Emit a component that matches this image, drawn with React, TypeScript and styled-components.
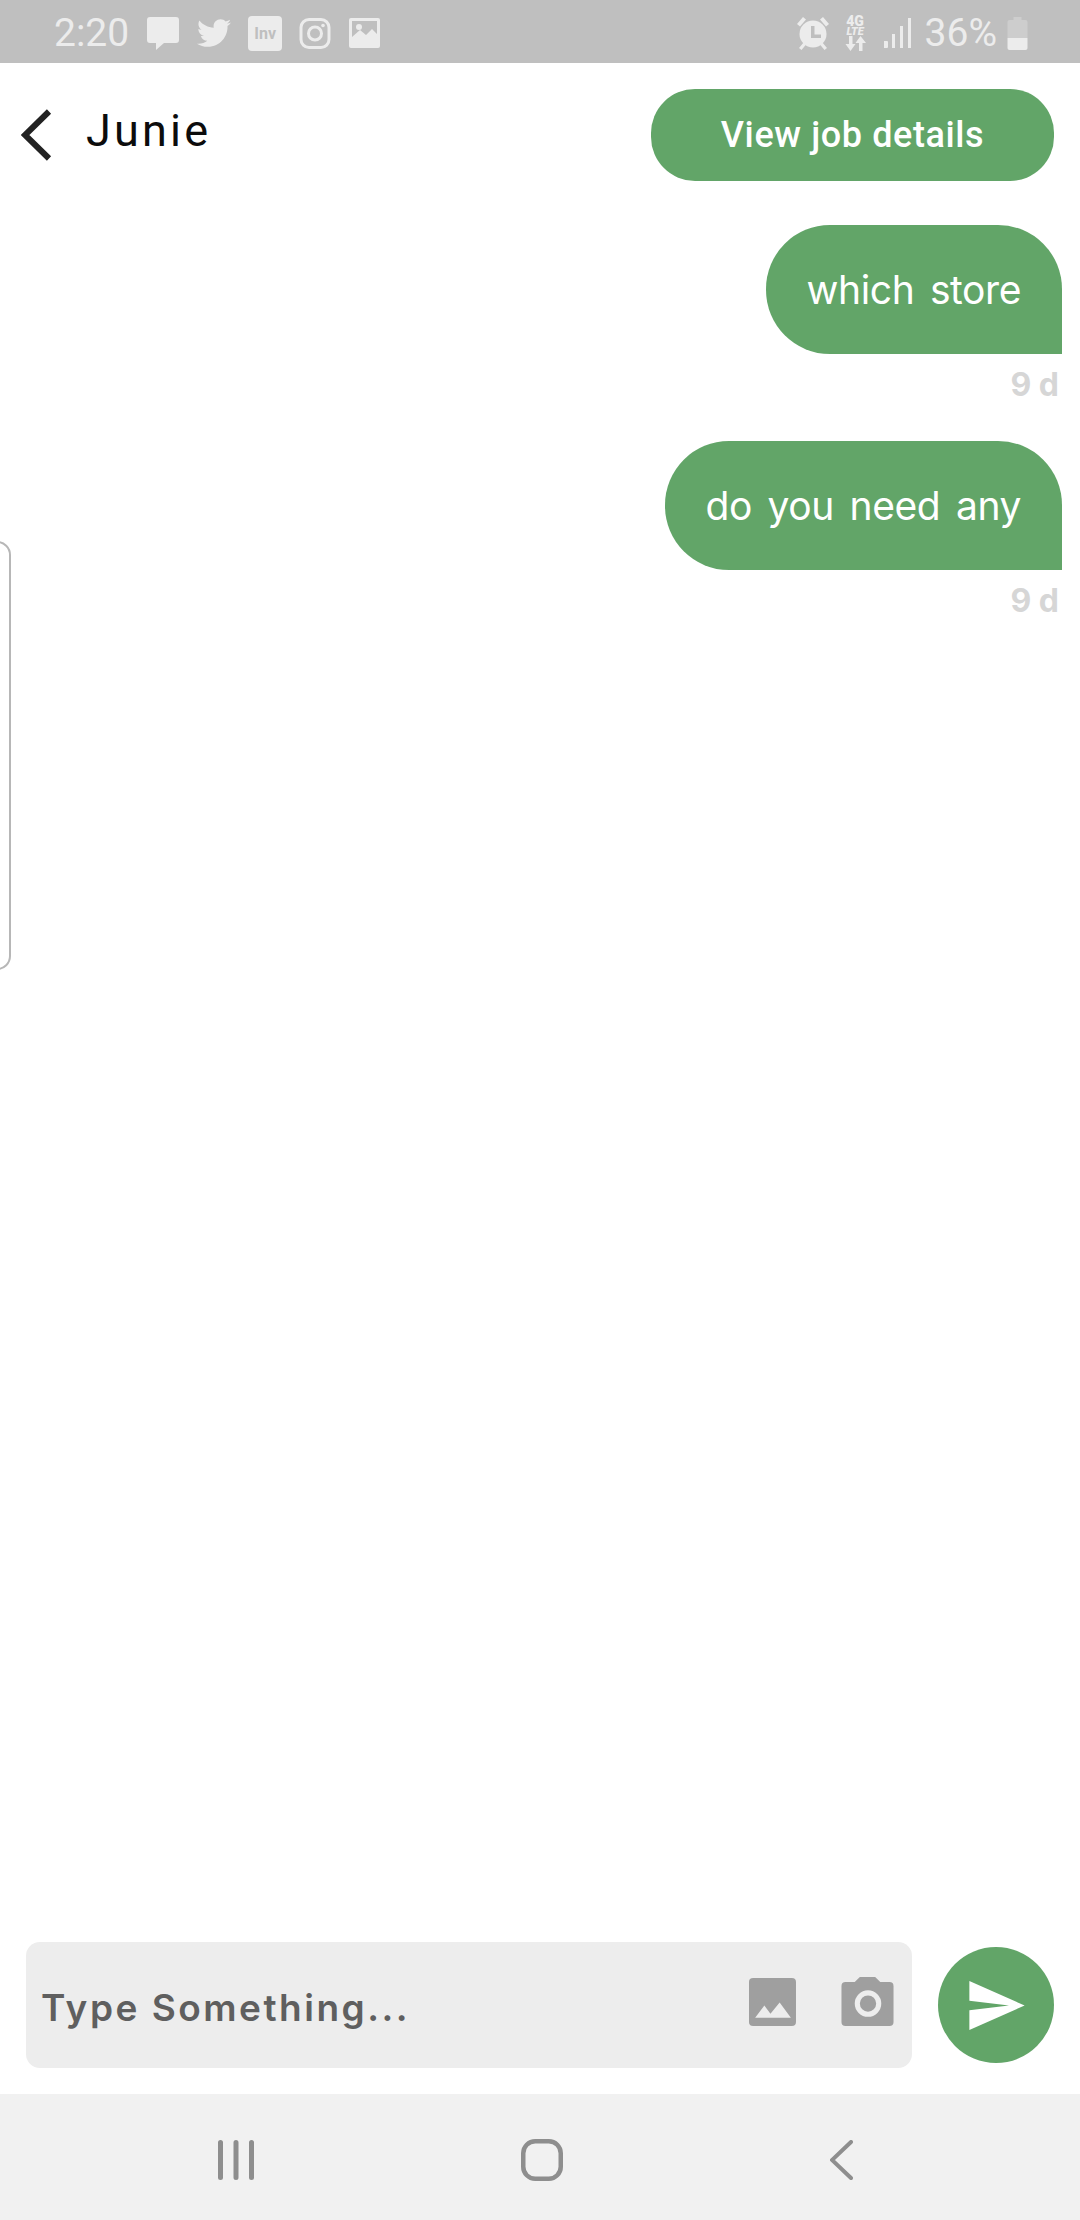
import { FaTwitter } from "react-icons/fa";
import styled, { createGlobalStyle } from "styled-components";

const GlobalStyle = createGlobalStyle`
  html, body {
    margin: 0;
    padding: 0;
    background: #ffffff;
  }
`;

const bubbleFont = `"Inter", "Noto Sans", sans-serif`;
const green = "#62a568";
const statusInk = "#ececec";

const Screen = styled.div`
  position: relative;
  width: 1080px;
  height: 2220px;
  display: flex;
  flex-direction: column;
  overflow: hidden;
  background: #ffffff;
`;

const StatusBar = styled.div`
  height: 63px;
  flex: none;
  display: flex;
  align-items: center;
  justify-content: space-between;
  padding: 3px 52px 0 54px;
  box-sizing: border-box;
  background: #bfbfbf;
  color: ${statusInk};
`;

const StatusGroup = styled.div<{ $gap: number }>`
  display: flex;
  align-items: center;
  gap: ${(props) => props.$gap}px;
`;

const StatusText = styled.span<{ $after: number }>`
  font-family: "Roboto", sans-serif;
  font-weight: 400;
  font-size: 39px;
  line-height: 40px;
  margin-right: ${(props) => props.$after}px;
`;

const TwitterIcon = styled(FaTwitter)`
  width: 34px;
  height: 34px;
  display: block;
  color: ${statusInk};
`;

const InvBadge = styled.div`
  width: 34px;
  height: 35px;
  border-radius: 4px;
  background: ${statusInk};
  color: #bfbfbf;
  font-family: "Roboto", sans-serif;
  font-weight: 700;
  font-size: 16px;
  display: flex;
  align-items: center;
  justify-content: center;
`;

const NetworkStack = styled.div`
  width: 23px;
  display: flex;
  flex-direction: column;
  align-items: center;
  font-family: "Roboto", sans-serif;
  font-weight: 900;
  color: ${statusInk};
`;

const NetworkLabel = styled.span<{ $size: number; $italic?: boolean }>`
  font-size: ${(props) => props.$size}px;
  line-height: ${(props) => props.$size - 2}px;
  font-style: ${(props) => (props.$italic ? "italic" : "normal")};
`;

const Header = styled.header`
  flex: none;
  display: flex;
  align-items: center;
  padding: 26px 26px 0 21px;
`;

const BackIcon = styled.svg`
  width: 31px;
  height: 52px;
  display: block;
  flex: none;
`;

const Name = styled.div`
  margin: -10px 0 0 34px;
  flex: 1;
  font-family: "Roboto", sans-serif;
  font-size: 45px;
  letter-spacing: 3.2px;
  color: #0c0c0c;
`;

const JobButton = styled.button`
  width: 403px;
  height: 92px;
  border: none;
  border-radius: 44px;
  background: ${green};
  color: #ffffff;
  font-family: "Roboto", sans-serif;
  font-weight: 500;
  font-size: 36px;
  letter-spacing: 0.6px;
  padding: 0;
`;

const Messages = styled.main`
  flex: 1;
  display: flex;
  flex-direction: column;
  align-items: flex-end;
  gap: 29px;
  padding: 44px 18px 0 0;
`;

const Message = styled.div`
  display: flex;
  flex-direction: column;
  align-items: flex-end;
`;

const Bubble = styled.div`
  height: 129px;
  box-sizing: border-box;
  display: flex;
  align-items: center;
  padding: 0 41px;
  border-radius: 64px 64px 0 64px;
  background: ${green};
  color: #ffffff;
  font-family: ${bubbleFont};
  font-size: 39px;
  letter-spacing: -0.4px;
  word-spacing: 5px;
`;

const TimeStamp = styled.div`
  margin: 11px 3px 0 0;
  height: 47px;
  line-height: 40px;
  font-family: ${bubbleFont};
  font-weight: 700;
  font-size: 32px;
  color: #d6d6d6;
`;

const SideTab = styled.div`
  position: absolute;
  left: -21px;
  top: 541px;
  width: 28px;
  height: 425px;
  border: 2px solid #b7b7b7;
  border-radius: 14px;
  background: #ffffff;
`;

const Composer = styled.div`
  flex: none;
  display: flex;
  align-items: center;
  gap: 26px;
  padding: 0 26px 26px 26px;
`;

const InputBox = styled.div`
  flex: 1;
  height: 126px;
  box-sizing: border-box;
  display: flex;
  align-items: center;
  padding: 0 18px 0 15px;
  border-radius: 14px;
  background: #ededed;
`;

const Placeholder = styled.div`
  flex: 1;
  margin-top: 5px;
  font-family: ${bubbleFont};
  font-weight: 600;
  font-size: 37px;
  letter-spacing: 2.5px;
  color: #5f5f5f;
`;

const InputIcons = styled.div`
  display: flex;
  align-items: center;
  gap: 45px;
  margin-bottom: 7px;
`;

const SendButton = styled.button`
  width: 116px;
  height: 116px;
  flex: none;
  border: none;
  padding: 0;
  border-radius: 50%;
  background: ${green};
  display: flex;
  align-items: center;
  justify-content: center;
`;

const NavBar = styled.nav`
  height: 126px;
  flex: none;
  display: flex;
  align-items: center;
  justify-content: space-between;
  padding: 6px 227px 0 218px;
  box-sizing: border-box;
  background: #f1f1f1;
`;

export default function App() {
  return (
    <Screen>
      <GlobalStyle />
      <StatusBar>
        <StatusGroup $gap={17}>
          <StatusText $after={0}>2:20</StatusText>
          <svg width="34" height="33" viewBox="0 0 32 33">
            <path d="M3 0h26a3 3 0 0 1 3 3v20a3 3 0 0 1-3 3H17l-8 7v-7H3a3 3 0 0 1-3-3V3a3 3 0 0 1 3-3z" fill={statusInk} />
          </svg>
          <TwitterIcon />
          <InvBadge>Inv</InvBadge>
          <svg width="32" height="31" viewBox="0 0 31 31" fill="none" stroke={statusInk} strokeWidth="3">
            <rect x="1.5" y="1.5" width="28" height="28" rx="8" />
            <circle cx="15.5" cy="15.5" r="6.5" />
            <circle cx="23.5" cy="7.5" r="1.8" fill={statusInk} stroke="none" />
          </svg>
          <svg width="33" height="30" viewBox="0 0 31 30">
            <rect width="31" height="30" rx="2" fill={statusInk} />
            <rect x="3" y="3" width="25" height="24" fill="#bfbfbf" />
            <path d="M3 19l8-7 6 5 6-6 5 5v11H3z" fill={statusInk} />
            <circle cx="10" cy="9" r="3" fill={statusInk} />
          </svg>
        </StatusGroup>
        <StatusGroup $gap={14}>
          <svg width="34" height="33" viewBox="0 0 32 33">
            <circle cx="16" cy="17" r="13.500" fill={statusInk} />
            <path d="M14 9h3.500v8.500H24V21H14z" fill="#bfbfbf" />
            <path d="M0 7l6-7 3 2.500-6 7zM32 7l-6-7-3 2.500 6 7zM2 31l5-6 2.500 2-5 6zM30 31l-5-6-2.500 2 5 6z" fill={statusInk} />
          </svg>
          <NetworkStack>
            <NetworkLabel $size={14}>4G</NetworkLabel>
            <NetworkLabel $size={11} $italic>LTE</NetworkLabel>
            <svg width="23" height="15" viewBox="0 0 22 15">
              <path d="M4.500 0h3.500v8h3l-5 7-5-7h3.500zM16 0l5.500 7h-3.500v8h-3.500V7H11z" fill={statusInk} />
            </svg>
          </NetworkStack>
          <svg width="28" height="30" viewBox="0 0 28 30" style={{ marginLeft: 2 }}>
            <path d="M1 23h3a1 1 0 0 1 1 1v5a1 1 0 0 1-1 1H1zM9 16h3v14H9zM17 8h3v22h-3zM25 0h3v30h-3z" fill={statusInk} />
          </svg>
          <StatusText $after={-4}>36%</StatusText>
          <svg width="21" height="33" viewBox="0 0 20 33">
            <path d="M6 0h8v3h4a2 2 0 0 1 2 2v16H0V5a2 2 0 0 1 2-2h4z" fill="#cdcdcd" />
            <path d="M0 21h20v10a2 2 0 0 1-2 2H2a2 2 0 0 1-2-2z" fill={statusInk} />
          </svg>
        </StatusGroup>
      </StatusBar>

      <Header>
        <BackIcon viewBox="0 0 31 52">
          <path d="M28 2.500L4 26l24 23.500" fill="none" stroke="#222222" strokeWidth="6" />
        </BackIcon>
        <Name>Junie</Name>
        <JobButton>View job details</JobButton>
      </Header>

      <Messages>
        <Message>
          <Bubble>which store</Bubble>
          <TimeStamp>9 d</TimeStamp>
        </Message>
        <Message>
          <Bubble>do you need any</Bubble>
          <TimeStamp>9 d</TimeStamp>
        </Message>
      </Messages>

      <SideTab />

      <Composer>
        <InputBox>
          <Placeholder>Type Something...</Placeholder>
          <InputIcons>
            <svg width="47" height="48" viewBox="0 0 46 47">
              <rect width="46" height="47" rx="4" fill="#9f9f9f" />
              <path d="M6 39l9-12 6 8 9-11 11 15z" fill="#ededed" />
            </svg>
            <svg width="53" height="49" viewBox="0 0 51 48">
              <path d="M18 0h15l5 5h9a4 4 0 0 1 4 4v35a4 4 0 0 1-4 4H4a4 4 0 0 1-4-4V9a4 4 0 0 1 4-4h9z" fill="#9f9f9f" />
              <circle cx="26" cy="26" r="10.500" fill="none" stroke="#ededed" strokeWidth="5" />
            </svg>
          </InputIcons>
        </InputBox>
        <SendButton>
          <svg width="56" height="49" viewBox="0 0 53 47" style={{ marginLeft: 2 }}>
            <path d="M0 0l53 23.500L0 47V28l38-4.500L0 19z" fill="#ffffff" />
          </svg>
        </SendButton>
      </Composer>

      <NavBar>
        <svg width="36" height="40" viewBox="0 0 36 40" fill="none" stroke="#8e8e8e" strokeWidth="5" strokeLinecap="round">
          <path d="M2.500 2.500v35M18 2.500v35M33.500 2.500v35" />
        </svg>
        <svg width="42" height="42" viewBox="0 0 42 42" fill="none" stroke="#8e8e8e" strokeWidth="4.500">
          <rect x="2.250" y="2.250" width="37.500" height="37.500" rx="12" />
        </svg>
        <svg width="23" height="40" viewBox="0 0 23 40" fill="none" stroke="#8e8e8e" strokeWidth="4" strokeLinecap="round">
          <path d="M21 2L2 20l19 18" />
        </svg>
      </NavBar>
    </Screen>
  );
}
